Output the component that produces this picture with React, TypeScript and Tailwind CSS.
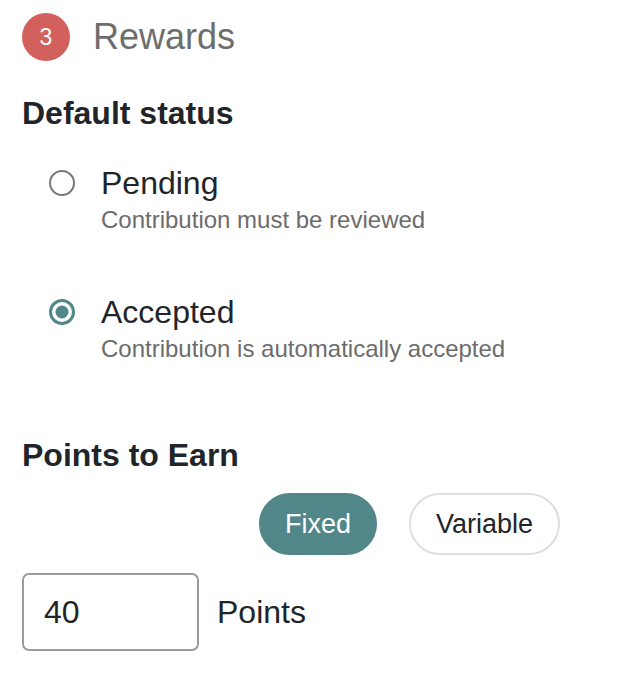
import React from "react";

function Radio({ checked }: { checked: boolean }) {
  return checked ? (
    <svg width="28" height="28" viewBox="0 0 28 28">
      <circle cx="14" cy="14" r="11.5" fill="white" stroke="#52878a" strokeWidth="3" />
      <circle cx="14" cy="14" r="6.5" fill="#52878a" />
    </svg>
  ) : (
    <svg width="28" height="28" viewBox="0 0 28 28">
      <circle cx="14" cy="14" r="12" fill="white" stroke="#777777" strokeWidth="2" />
    </svg>
  );
}

function Option({ checked, label, sub, className }: { checked: boolean; label: string; sub: string; className?: string }) {
  return (
    <div className={"flex ml-[26px] " + (className ?? "")}>
      <div className="h-[36px] w-[28px] flex items-center justify-center">
        <Radio checked={checked} />
      </div>
      <div className="ml-[25px] flex flex-col">
        <div className="text-[32px] leading-[36px] text-[#212529]">{label}</div>
        <div className="mt-[4px] text-[24px] leading-[30px] text-[#6c6c6c]">{sub}</div>
      </div>
    </div>
  );
}

export default function App() {
  return (
    <div className="w-[622px] h-[684px] bg-white px-[22px] pt-[13px]" style={{ fontFamily: '"Liberation Sans", Arial, sans-serif' }}>
      <div className="flex items-center">
        <div className="w-[48px] h-[48px] rounded-full bg-[#d2605d] flex items-center justify-center text-white text-[23px] leading-none font-medium">3</div>
        <div className="ml-[23px] text-[36px] leading-[40px] text-[#6d6d6d]">Rewards</div>
      </div>

      <div className="mt-[32px] text-[32px] leading-[40px] font-bold text-[#212529]">Default status</div>

      <Option className="mt-[32px]" checked={false} label="Pending" sub="Contribution must be reviewed" />
      <Option className="mt-[59px]" checked={true} label="Accepted" sub="Contribution is automatically accepted" />

      <div className="mt-[71px] text-[32px] leading-[40px] font-bold text-[#212529]">Points to Earn</div>

      <div className="mt-[18px] flex ml-[237px] gap-[32px]">
        <button className="h-[62px] px-[24px] rounded-full bg-[#52878a] border-2 border-[#52878a] text-white text-[27px]">Fixed</button>
        <button className="h-[62px] px-[25px] rounded-full bg-white border-2 border-[#dedede] text-[#212529] text-[27px]">Variable</button>
      </div>

      <div className="mt-[18px] flex items-center">
        <div className="w-[177px] h-[78px] border-2 border-[#9a9a9a] rounded-[7px] flex items-center px-[20px] text-[32px] text-[#212529]">40</div>
        <div className="ml-[18px] text-[32px] text-[#212529]">Points</div>
      </div>
    </div>
  );
}
